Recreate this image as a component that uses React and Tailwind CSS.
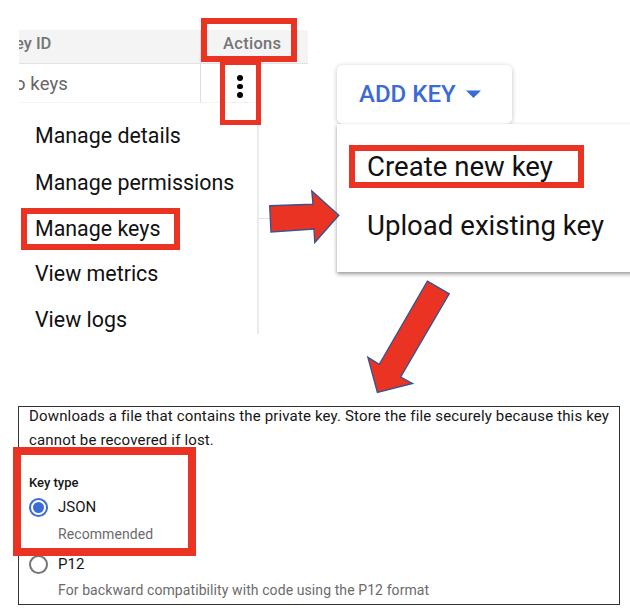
const MENU = [
  { label: "Manage details", cls: "h-[47px]" },
  { label: "Manage permissions", cls: "h-[47px]" },
  { label: "Manage keys", cls: "h-[45px]" },
  { label: "View metrics", cls: "h-[45px]" },
  { label: "View logs", cls: "h-[46px]" },
];

function KeysTable() {
  return (
    <section className="mt-[30px] ml-[19px] h-[304px] w-[289px] shrink-0 overflow-hidden">
      <div className="flex h-[34px] border-b border-[#e2e2e2] bg-[#f4f4f4] text-[16.5px] leading-[27px] font-medium text-[#757575]">
        <div className="w-[182px] overflow-hidden border-r border-[#dedede]">
          <span className="-ml-[4px]">ey ID</span>
        </div>
        <div className="pl-[22px] tracking-[0.3px]">Actions</div>
      </div>
      <div className="flex h-[38px] text-[18.5px] text-[#666]">
        <div className="w-[182px] overflow-hidden border-r border-[#dedede] leading-[41px]">
          <span className="-ml-[4px] tracking-[0.1px]">o keys</span>
        </div>
        <div className="flex w-[78px] flex-col items-center gap-[3px] pt-[11px]">
          <i className="size-[5.5px] rounded-full bg-black" />
          <i className="size-[5.5px] rounded-full bg-black" />
          <i className="size-[5.5px] rounded-full bg-black" />
        </div>
      </div>
      <div className="flex">
        <ul className="h-[232px] w-[240px] shrink-0 border-t border-r-2 border-t-[#f3f3f3] border-r-[#ebebeb] bg-white pt-[10px] pl-4 text-[21.4px] text-[#111]">
          {MENU.map((m) => (
            <li key={m.label} className={"flex items-center whitespace-nowrap " + m.cls}>
              {m.label}
            </li>
          ))}
        </ul>
        <div className="mt-[116px] h-px w-[49px] bg-[#e2e2e2]" />
      </div>
    </section>
  );
}

function AddKey() {
  return (
    <section className="mt-[65px] ml-[29px] w-[310px] shrink-0">
      <div className="flex h-[59px] w-[175px] items-center rounded-[6px] bg-white pb-[2px] pl-[22px] text-[24px] font-medium text-[#3b6bd6] shadow-[0_1px_5px_rgba(0,0,0,0.25)]">
        <span className="whitespace-nowrap">ADD KEY</span>
        <svg className="ml-[10px]" width="15" height="8" viewBox="0 0 15 8">
          <path d="M0 0.500h15L7.500 8z" fill="currentColor" />
        </svg>
      </div>
      <div className="relative h-[148px] bg-white pt-[13px] pl-[30px] text-[27.600px] whitespace-nowrap text-[#111] shadow-[0_2px_4px_rgba(0,0,0,0.42)]">
        <div className="h-[59px] leading-[59px]">Create new key</div>
        <div className="h-[59px] leading-[59px]">Upload existing key</div>
      </div>
    </section>
  );
}

function KeyType() {
  return (
    <section className="mt-[72px] ml-[18px] flex h-[199px] w-[602px] flex-col border-[1.5px] border-[#333] pl-[10px] text-[15px] text-[#161616]">
      <p className="-mt-[3px] leading-[24px] whitespace-nowrap">
        <span className="tracking-[0.155px]">Downloads a file that contains the private key. Store the file securely because this key</span>
        <br />
        <span className="tracking-[0.155px]">cannot be recovered if lost.</span>
      </p>
      <h2 className="mt-[21px] text-[13px] leading-[20px] font-medium">Key type</h2>
      <div className="mt-[3px] flex h-[22px] items-center">
        <span className="flex size-[19px] items-center justify-center rounded-full border-2 border-[#3b6bd6]">
          <i className="size-[11px] rounded-full bg-[#3b6bd6]" />
        </span>
        <span className="ml-[10px]">JSON</span>
      </div>
      <p className="mt-[5px] ml-[29px] text-[14px] leading-[22px] tracking-[0.09px] text-[#6b6b6b]">Recommended</p>
      <div className="mt-[8px] flex h-[22px] items-center">
        <span className="size-[19px] rounded-full border-2 border-[#757575]" />
        <span className="ml-[10px]">P12</span>
      </div>
      <p className="mt-[4px] ml-[29px] text-[14px] leading-[22px] tracking-[0.09px] whitespace-nowrap text-[#6b6b6b]">
        For backward compatibility with code using the P12 format
      </p>
    </section>
  );
}

export default function App() {
  return (
    <main className="relative h-[616px] w-[630px] overflow-hidden bg-white font-['Roboto',sans-serif]">
      <div className="flex h-[334px]">
        <KeysTable />
        <AddKey />
      </div>
      <KeyType />

      <div className="absolute top-[18px] left-[201px] h-[44px] w-[96px] border-[6px] border-[#eb3323]" />
      <div className="absolute top-[60px] left-[220px] h-[65px] w-[41px] border-[5.5px] border-[#eb3323]" />
      <div className="absolute top-[208px] left-[21px] h-[42px] w-[159px] border-[6px] border-[#eb3323]" />
      <div className="absolute top-[145px] left-[349px] h-[43px] w-[235px] border-[6px] border-[#eb3323]" />
      <div className="absolute top-[447px] left-[13px] h-[109px] w-[183px] border-[8px] border-[#eb3323]" />
      <svg className="absolute inset-0" width="630" height="616" viewBox="0 0 630 616" fill="#eb3323" stroke="#38558f" strokeWidth="1.4">
        <path d="M269.700 205.700L313 204.300L311.800 191L338.800 215.300L314.800 242.400L314 229L271 232Z" />
        <path d="M427.400 281.200L449.200 293.800L400.700 377L412.500 383.500L377.400 392.500L367.900 357.300L379.300 364.300Z" />
      </svg>
    </main>
  );
}
